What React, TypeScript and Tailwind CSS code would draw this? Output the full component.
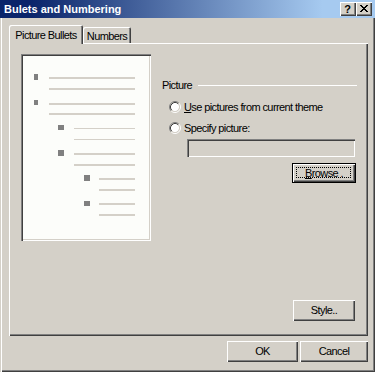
import React from "react";

const raised =
  "shadow-[inset_1px_1px_#ffffff,inset_-1px_-1px_#404040,inset_-2px_-2px_#808080]";
const sunken =
  "shadow-[inset_1px_1px_#808080,inset_2px_2px_#404040,inset_-1px_-1px_#ffffff,inset_-2px_-2px_#d4d0c8]";

function Radio() {
  return (
    <svg width="12" height="12" viewBox="0 0 12 12" className="shrink-0">
      <circle cx="6" cy="6" r="4.2" fill="#ffffff" />
      <path d="M2.11 9.89 A5.5 5.5 0 0 1 9.89 2.11" fill="none" stroke="#808080" strokeWidth="1" />
      <path d="M9.89 2.11 A5.5 5.5 0 0 1 2.11 9.89" fill="none" stroke="#ffffff" strokeWidth="1" />
      <path d="M2.82 9.18 A4.5 4.5 0 0 1 9.18 2.82" fill="none" stroke="#404040" strokeWidth="1" />
      <path d="M9.18 2.82 A4.5 4.5 0 0 1 2.82 9.18" fill="none" stroke="#d4d0c8" strokeWidth="1" />
    </svg>
  );
}

function CloseGlyph() {
  const px: [number, number, number][] = [
    [0, 0, 2], [6, 0, 2],
    [1, 1, 2], [5, 1, 2],
    [2, 2, 4],
    [3, 3, 2],
    [2, 4, 4],
    [1, 5, 2], [5, 5, 2],
    [0, 6, 2], [6, 6, 2],
  ];
  return (
    <svg width="8" height="7" viewBox="0 0 8 7" shapeRendering="crispEdges">
      {px.map(([x, y, w], i) => (
        <rect key={i} x={x} y={y} width={w} height={1} fill="#000" />
      ))}
    </svg>
  );
}

type Grp = {
  g: string;
  b: string;
  l: string;
  l1: string;
  gap: string;
  l2: string;
};

const groups: Grp[] = [
  { g: "mt-[20px]", b: "ml-[13px] w-[4px] h-[6px]", l: "ml-[11px] w-[86px] pt-[3px]", l1: "h-[2px]", gap: "mt-[9px]", l2: "h-[2px]" },
  { g: "mt-[10px]", b: "ml-[13px] w-[4px] h-[5px]", l: "ml-[11px] w-[86px] pt-[3px]", l1: "h-[2px]", gap: "mt-[8px]", l2: "h-[2px]" },
  { g: "mt-[10px]", b: "ml-[37px] w-[6px] h-[5px]", l: "ml-[10px] w-[61px] pt-[3px]", l1: "h-[1px]", gap: "mt-[10px]", l2: "h-[1px]" },
  { g: "mt-[10px]", b: "ml-[37px] w-[6px] h-[6px]", l: "ml-[10px] w-[61px] pt-[3px]", l1: "h-[2px]", gap: "mt-[9px]", l2: "h-[2px]" },
  { g: "mt-[9px]", b: "ml-[63px] w-[6px] h-[6px]", l: "ml-[9px] w-[36px] pt-[3px]", l1: "h-[2px]", gap: "mt-[9px]", l2: "h-[2px]" },
  { g: "mt-[10px]", b: "ml-[63px] w-[6px] h-[5px]", l: "ml-[9px] w-[36px] pt-[2px]", l1: "h-[2px]", gap: "mt-[9px]", l2: "h-[2px]" },
];

export default function App() {
  return (
    <div
      className={
        "relative w-[375px] h-[372px] overflow-hidden bg-[#d4d0c8] flex flex-col text-black text-[11px] leading-[13px] tracking-[-0.6px] font-['Liberation_Sans',Arial,sans-serif] shadow-[inset_1px_0_#d4d0c8,inset_2px_0_#ffffff,inset_-1px_-1px_#404040,inset_-2px_-2px_#808080]"
      }
    >
      {/* Title bar */}
      <div className="h-[18px] shrink-0 flex items-center pl-[4px] pr-[3px] bg-[linear-gradient(to_right,#0a246a_0%,#0a246a_8%,#a6caf0_86%)]">
        <span className="text-white font-bold text-[11px] tracking-normal">Bulets and Numbering</span>
        <div className="ml-auto flex">
          <div className={`w-[16px] h-[14px] bg-[#d4d0c8] flex items-center justify-center ${raised}`}>
            <span className="font-bold text-[11px] leading-[11px] tracking-normal pr-[1px]">?</span>
          </div>
          <div className={`w-[16px] h-[14px] bg-[#d4d0c8] flex items-center justify-center pr-[1px] pb-[1px] ${raised}`}>
            <CloseGlyph />
          </div>
        </div>
      </div>

      {/* Body */}
      <div className="flex-1 flex flex-col pl-[9px] pr-[7px]">
        {/* Tabs */}
        <div className="mt-[7px] h-[19px] flex items-start relative z-10">
          <div className="w-[74px] h-[19px] bg-[#d4d0c8] rounded-t-[2px] pt-[4px] text-center shadow-[inset_1px_1px_#ffffff,inset_-1px_0_#404040,inset_-2px_0_#808080]">
            Picture Bullets
          </div>
          <div className="mt-[2px] w-[48px] h-[16px] bg-[#d4d0c8] rounded-t-[2px] pt-[3px] text-center shadow-[inset_1px_1px_#ffffff,inset_-1px_0_#404040,inset_-2px_0_#808080]">
            Numbers
          </div>
        </div>

        {/* Panel */}
        <div className="-mt-[1px] h-[293px] flex pl-[12px] pt-[11px] shadow-[inset_1px_1px_#ffffff,inset_-1px_-1px_#404040,inset_-2px_-2px_#808080]">
          {/* Preview */}
          <div className={`w-[130px] h-[187px] shrink-0 bg-[#fcfdfa] flex flex-col ${sunken}`}>
            {groups.map((g, i) => (
              <div key={i} className={`flex items-start ${g.g}`}>
                <div className={`bg-[#808080] shrink-0 ${g.b}`} />
                <div className={`flex flex-col shrink-0 ${g.l}`}>
                  <div className={`bg-[#d4d0c8] ${g.l1}`} />
                  <div className={`bg-[#d4d0c8] ${g.gap} ${g.l2}`} />
                </div>
              </div>
            ))}
          </div>

          {/* Right column */}
          <div className="ml-[11px] w-[195px] flex flex-col">
            <div className="mt-[25px] h-[13px] flex items-center">
              <span>Picture</span>
              <div className="ml-[6px] flex-1 h-px bg-white" />
            </div>
            <div className="mt-[8px] h-[14px] flex items-center pl-[7px]">
              <Radio />
              <span className="ml-[3px]">
                <span className="underline underline-offset-1">U</span>se pictures from current theme
              </span>
            </div>
            <div className="mt-[7px] h-[14px] flex items-center pl-[7px]">
              <Radio />
              <span className="ml-[3px]">Specify picture:</span>
            </div>
            <div className={`mt-[4px] ml-[25px] w-[168px] h-[18px] bg-[#d4d0c8] ${sunken}`} />
            <div className="mt-[6px] self-end mr-[1px] w-[64px] h-[20px] border border-black bg-[#d4d0c8]">
              <div className={`relative w-full h-full flex items-center justify-center ${raised}`}>
                <div className="absolute left-[3px] top-[3px] right-[4px] bottom-[4px] border border-dotted border-black" />
                <span>
                  <span className="underline underline-offset-1">B</span>rowse .
                </span>
              </div>
            </div>
            <div className={`mt-auto mb-[15px] self-end mr-[2px] w-[62px] h-[21px] flex items-center justify-center ${raised}`}>
              Style..
            </div>
          </div>
        </div>

        {/* Bottom buttons */}
        <div className="mt-[5px] flex justify-end gap-[2px]">
          <div className={`w-[71px] h-[21px] flex items-center justify-center ${raised}`}>OK</div>
          <div className={`w-[68px] h-[21px] flex items-center justify-center ${raised}`}>Cancel</div>
        </div>
      </div>
    </div>
  );
}
